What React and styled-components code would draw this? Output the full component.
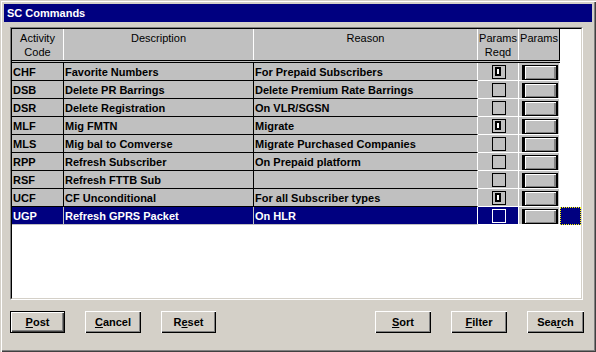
import React from 'react'
import styled, { createGlobalStyle } from 'styled-components'

const GlobalStyle = createGlobalStyle`
  html, body {
    margin: 0;
    padding: 0;
    background: #d4d0c8;
  }
  body {
    font-family: 'Liberation Sans', Arial, sans-serif;
  }
`

const COLS = [52, 190, 224, 41, 41]

const rows = [
  { code: 'CHF', desc: 'Favorite Numbers', reason: 'For Prepaid Subscribers', req: true },
  { code: 'DSB', desc: 'Delete PR Barrings', reason: 'Delete Premium Rate Barrings', req: false },
  { code: 'DSR', desc: 'Delete Registration', reason: 'On VLR/SGSN', req: false },
  { code: 'MLF', desc: 'Mig FMTN', reason: 'Migrate', req: true },
  { code: 'MLS', desc: 'Mig bal to Comverse', reason: 'Migrate Purchased Companies', req: false },
  { code: 'RPP', desc: 'Refresh Subscriber', reason: 'On Prepaid platform', req: false },
  { code: 'RSF', desc: 'Refresh FTTB Sub', reason: '', req: false },
  { code: 'UCF', desc: 'CF Unconditional', reason: 'For all Subscriber types', req: true },
  { code: 'UGP', desc: 'Refresh GPRS Packet', reason: 'On HLR', req: false, selected: true },
]

const Window = styled.div`
  width: 596px;
  height: 352px;
  box-sizing: border-box;
  padding: 4px;
  background: #d4d0c8;
  box-shadow: inset 1px 1px 0 #d4d0c8, inset 2px 2px 0 #fff,
    inset -1px -1px 0 #404040, inset -2px -2px 0 #808080;
  display: flex;
  flex-direction: column;
`

const TitleBar = styled.div`
  height: 18px;
  background: #000080;
  color: #fff;
  font-weight: bold;
  font-size: 11px;
  line-height: 19px;
  padding-left: 3px;
`

const GridFrame = styled.div`
  margin: 5px 0 0 6px;
  width: 573px;
  height: 273px;
  box-sizing: border-box;
  border: 1px solid;
  border-color: #808080 #fff #fff #808080;
`

const GridInner = styled.div`
  height: 100%;
  box-sizing: border-box;
  border: 1px solid;
  border-color: #000 #d4d0c8 #d4d0c8 #000;
  background: #fff;
  overflow: hidden;
`

const HeaderRow = styled.div`
  display: flex;
  width: 548px;
  height: 31px;
  background: #c0c0c0;
  border-bottom: 3px double #000;
`

const HeaderCell = styled.div`
  width: ${p => p.$w}px;
  box-sizing: border-box;
  border-right: 1px solid ${p => (p.$last ? '#000' : '#fff')};
  text-align: center;
  font-size: 11px;
  line-height: 14px;
  padding-top: 2px;
  color: #000;
`

const Row = styled.div`
  display: flex;
  height: 18px;
`

const lineColor = p => (p.$light ? '#fff' : p.$sel ? '#c0c0c0' : '#000')

const Cell = styled.div`
  width: ${p => p.$w}px;
  box-sizing: border-box;
  height: 18px;
  background: ${p => (p.$sel ? '#000080' : '#c0c0c0')};
  color: ${p => (p.$sel ? '#fff' : '#000')};
  border-right: 1px solid ${p => (p.$edgeLight ? '#fff' : lineColor(p))};
  border-bottom: 1px solid ${lineColor};
  font-size: 11px;
  font-weight: bold;
  line-height: 17px;
  padding: 1px 0 0 1px;
  white-space: nowrap;
  overflow: hidden;
  display: flex;
  align-items: center;
  justify-content: ${p => (p.$center ? 'center' : 'flex-start')};
`

const ParamsButton = styled.span`
  display: block;
  width: 36px;
  height: 15px;
  box-sizing: border-box;
  margin: 1px 0 0 2px;
  background: #c0c0c0;
  border: 1px solid #000;
  border-left-width: 3px;
  border-right-width: 2px;
  box-shadow: inset 1px 1px 0 #fff, inset -2px -1px 0 #808080;
`

const Indicator = styled.div`
  width: 21px;
  height: 18px;
  box-sizing: border-box;
  background: #000080;
  border: 1px dotted #ffff00;
`

const ButtonBar = styled.div`
  display: flex;
  justify-content: space-between;
  width: 574px;
  margin: 11px 0 0 6px;
`

const ButtonGroup = styled.div`
  display: flex;
  gap: ${p => p.$gap}px;
`

const Button = styled.button`
  width: ${p => p.$w}px;
  height: 22px;
  padding: 0;
  margin: 0;
  background: #d4d0c8;
  font-family: 'Liberation Sans', Arial, sans-serif;
  font-size: 11px;
  font-weight: bold;
  color: #000;
  border: ${p => (p.$default ? '1px solid #000' : 'none')};
  box-shadow: ${p =>
    p.$default
      ? 'inset 1px 1px 0 #fff, inset -1px -1px 0 #404040, inset -2px -2px 0 #808080'
      : 'inset 1px 1px 0 #fff, inset -1px -1px 0 #000, inset -2px -2px 0 #808080'};
  box-sizing: border-box;
  u {
    text-decoration: underline;
  }
`

const CheckBox = ({ checked, selected }) => (
  <svg width="14" height="14" viewBox="0 0 14 14">
    <rect x="0.5" y="0.5" width="13" height="13" fill="none" stroke={selected ? '#fff' : '#000'} />
    {checked && (
      <rect x="4" y="3" width="4" height="7" fill="#fff" stroke="#000" strokeWidth="2" />
    )}
  </svg>
)

const headers = [
  ['Activity', 'Code'],
  ['Description'],
  ['Reason'],
  ['Params', 'Reqd'],
  ['Params'],
]

const buttonsLeft = [
  { pre: '', key: 'P', post: 'ost', w: 55, def: true },
  { pre: '', key: 'C', post: 'ancel', w: 56 },
  { pre: 'R', key: 'e', post: 'set', w: 55 },
]

const buttonsRight = [
  { pre: '', key: 'S', post: 'ort', w: 56 },
  { pre: '', key: 'F', post: 'ilter', w: 56 },
  { pre: 'Sea', key: 'r', post: 'ch', w: 57 },
]

const renderButton = b => (
  <Button key={b.pre + b.key + b.post} $w={b.w} $default={b.def}>
    {b.pre}
    <u>{b.key}</u>
    {b.post}
  </Button>
)

export default function App() {
  return (
    <>
      <GlobalStyle />
      <Window>
        <TitleBar>SC Commands</TitleBar>
        <GridFrame>
          <GridInner>
            <HeaderRow>
              {headers.map((h, i) => (
                <HeaderCell key={i} $w={COLS[i]} $last={i === headers.length - 1}>
                  {h.map(line => (
                    <div key={line}>{line}</div>
                  ))}
                </HeaderCell>
              ))}
            </HeaderRow>
            {rows.map(r => (
              <Row key={r.code}>
                <Cell $w={COLS[0]} $sel={r.selected}>{r.code}</Cell>
                <Cell $w={COLS[1]} $sel={r.selected}>{r.desc}</Cell>
                <Cell $w={COLS[2]} $sel={r.selected} $edgeLight>{r.reason}</Cell>
                <Cell $w={COLS[3]} $sel={r.selected} $light $center>
                  <CheckBox checked={r.req} selected={r.selected} />
                </Cell>
                <Cell $w={COLS[4]} $light>
                  <ParamsButton />
                </Cell>
                {r.selected && <Indicator />}
              </Row>
            ))}
          </GridInner>
        </GridFrame>
        <ButtonBar>
          <ButtonGroup $gap={20}>{buttonsLeft.map(renderButton)}</ButtonGroup>
          <ButtonGroup $gap={20}>{buttonsRight.map(renderButton)}</ButtonGroup>
        </ButtonBar>
      </Window>
    </>
  )
}
